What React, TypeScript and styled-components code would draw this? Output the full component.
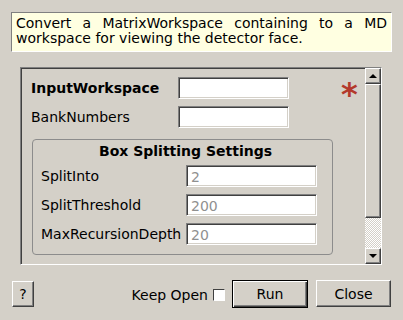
import React from 'react';
import styled, { createGlobalStyle, css } from 'styled-components';

const GlobalStyle = createGlobalStyle`
  html, body {
    margin: 0;
    padding: 0;
    background: #d4d0c8;
  }
  * {
    box-sizing: border-box;
  }
`;

const sunken = css`
  border: 1px solid;
  border-color: #808080 #ffffff #ffffff #808080;
  box-shadow: inset 1px 1px 0 #404040, inset -1px -1px 0 #d4d0c8;
`;

const raised = css`
  border: 1px solid;
  border-color: #ffffff #404040 #404040 #ffffff;
  box-shadow: inset -1px -1px 0 #808080;
`;

const Window = styled.div`
  width: 403px;
  height: 320px;
  background: #d4d0c8;
  display: flex;
  flex-direction: column;
  font-family: 'DejaVu Sans', 'Liberation Sans', sans-serif;
  font-size: 14px;
  color: #000;
  overflow: hidden;
`;

const Description = styled.div`
  margin: 12px 11px 0 11px;
  height: 40px;
  padding: 3px 4px;
  background: #ffffe1;
  border: 1px solid;
  border-color: #808080 #ffffff #ffffff #808080;
  line-height: 15px;
  text-align: justify;
`;

const Frame = styled.div`
  margin: 15px 21px 0 20px;
  height: 198px;
  display: flex;
  ${sunken};
`;

const Viewport = styled.div`
  flex: 1;
  padding: 9px 0 0 10px;
  display: flex;
  flex-direction: column;
  gap: 7px;
`;

const Row = styled.div<{ $labelWidth: number }>`
  display: flex;
  align-items: center;
  height: 22px;

  & > label {
    width: ${p => p.$labelWidth}px;
    flex: none;
  }
`;

const Label = styled.label<{ $bold?: boolean }>`
  font-weight: ${p => (p.$bold ? 'bold' : 'normal')};
  white-space: nowrap;
`;

const TextBox = styled.div<{ $width: number; $disabled?: boolean }>`
  width: ${p => p.$width}px;
  height: 22px;
  background: #fff;
  padding: 2px 4px 0;
  line-height: 18px;
  color: ${p => (p.$disabled ? '#909090' : '#000')};
  ${sunken};
`;

const Required = styled.span`
  margin-left: 52px;
  margin-top: 12px;
  font-family: 'DejaVu Sans', sans-serif;
  font-weight: bold;
  font-size: 32px;
  line-height: 22px;
  color: #b3392c;
`;

const Group = styled.fieldset`
  margin: 4px 0 0 1px;
  width: 301px;
  padding: 4px 0 9px 8px;
  border: 1px solid #8c8c8c;
  border-radius: 4px;
  display: flex;
  flex-direction: column;
  gap: 7px;
`;

const GroupTitle = styled.div`
  font-weight: bold;
  text-align: center;
  line-height: 15px;
  margin: 0 0 -1px -2px;
`;

const ScrollBar = styled.div`
  width: 16px;
  display: flex;
  flex-direction: column;
`;

const ArrowButton = styled.div<{ $dir: 'up' | 'down' }>`
  height: 16px;
  flex: none;
  display: flex;
  align-items: center;
  justify-content: center;
  background: #d4d0c8;
  ${raised};

  &::after {
    content: '';
    width: 0;
    height: 0;
    border-left: 4px solid transparent;
    border-right: 4px solid transparent;
    ${p =>
      p.$dir === 'up'
        ? 'border-bottom: 4px solid #000;'
        : 'border-top: 4px solid #000;'}
  }
`;

const Handle = styled.div`
  flex: 0 0 134px;
  background: #d4d0c8;
  ${raised};
`;

const Trough = styled.div`
  flex: 1;
  background: repeating-conic-gradient(#ffffff 0 25%, #d4d0c8 0 50%) 0 0 / 2px 2px;
`;

const BottomBar = styled.div`
  margin: 15px 12px 0 12px;
  display: flex;
  align-items: flex-start;
`;

const Button = styled.button<{ $width: number; $height: number; $default?: boolean }>`
  width: ${p => p.$width}px;
  height: ${p => p.$height}px;
  padding: 0;
  font-family: inherit;
  font-size: 14px;
  color: #000;
  background: #d4d0c8;
  ${p =>
    p.$default
      ? css`
          border: 1px solid #000;
          box-shadow: inset 1px 1px 0 #fff, inset -1px -1px 0 #404040, inset -2px -2px 0 #808080;
        `
      : raised};
`;

const KeepOpen = styled.label`
  margin-left: auto;
  margin-top: 7px;
  display: flex;
  align-items: center;
  gap: 5px;
`;

const CheckBox = styled.span`
  width: 12px;
  height: 12px;
  background: #fff;
  border: 1px solid;
  border-color: #404040 #fff #fff #404040;
`;

export default function App() {
  return (
    <Window>
      <GlobalStyle />
      <Description>
        Convert a MatrixWorkspace containing to a MD workspace for viewing the detector face.
      </Description>
      <Frame>
        <Viewport>
          <Row $labelWidth={147}>
            <Label $bold>InputWorkspace</Label>
            <TextBox $width={111} />
            <Required>*</Required>
          </Row>
          <Row $labelWidth={147}>
            <Label>BankNumbers</Label>
            <TextBox $width={111} />
          </Row>
          <Group>
            <GroupTitle>Box Splitting Settings</GroupTitle>
            <Row $labelWidth={145}>
              <Label>SplitInto</Label>
              <TextBox $width={131} $disabled>2</TextBox>
            </Row>
            <Row $labelWidth={145}>
              <Label>SplitThreshold</Label>
              <TextBox $width={131} $disabled>200</TextBox>
            </Row>
            <Row $labelWidth={145}>
              <Label>MaxRecursionDepth</Label>
              <TextBox $width={131} $disabled>20</TextBox>
            </Row>
          </Group>
        </Viewport>
        <ScrollBar>
          <ArrowButton $dir="up" />
          <Handle />
          <Trough />
          <ArrowButton $dir="down" />
        </ScrollBar>
      </Frame>
      <BottomBar>
        <Button $width={22} $height={26} style={{ marginTop: 1 }}>?</Button>
        <KeepOpen>
          Keep Open <CheckBox />
        </KeepOpen>
        <Button $width={76} $height={28} $default style={{ marginLeft: 7 }}>Run</Button>
        <Button $width={75} $height={27} style={{ marginLeft: 8 }}>Close</Button>
      </BottomBar>
    </Window>
  );
}
